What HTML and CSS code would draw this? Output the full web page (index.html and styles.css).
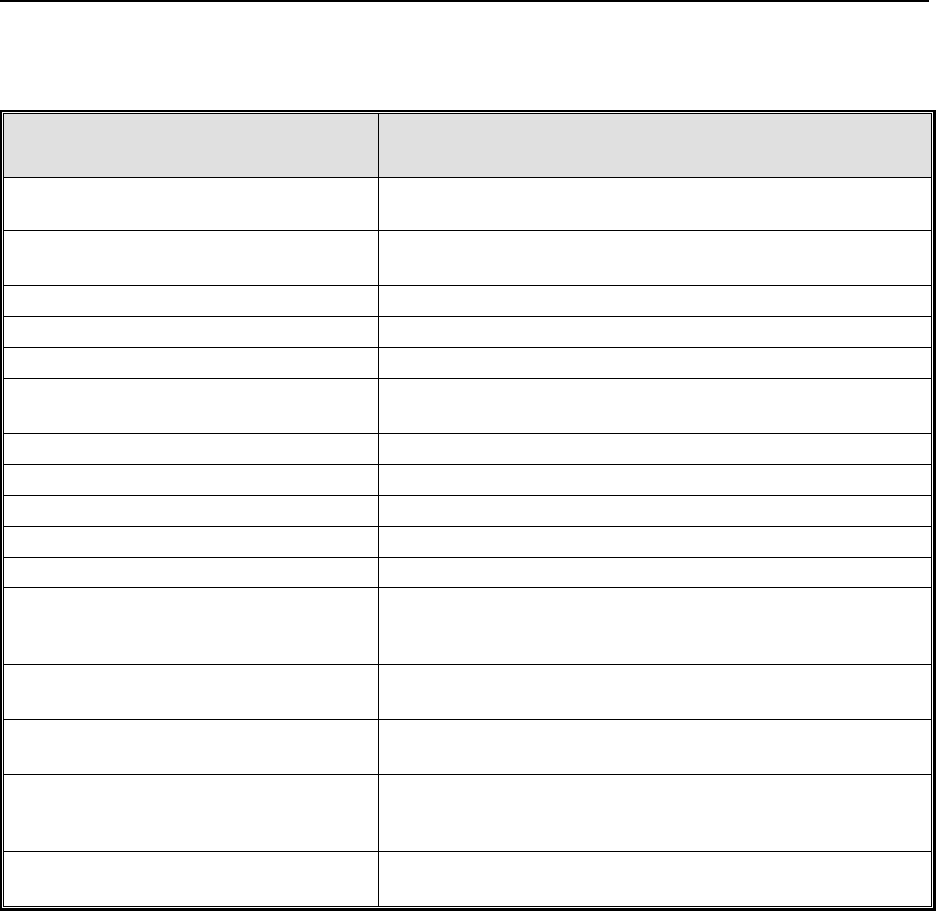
FILE: index.html
```html
<!DOCTYPE html>
<html lang="en">
<head>
<meta charset="utf-8">
<title>Table</title>
<link rel="stylesheet" href="styles.css">
</head>
<body>
<div class="rule"></div>
<div class="frame">
  <div class="grid">
    <div class="row head"><div class="c1"></div><div class="c2"></div></div>
    <div class="row d first"><div class="c1"></div><div class="c2"></div></div>
    <div class="row d"><div class="c1"></div><div class="c2"></div></div>
    <div class="row s"><div class="c1"></div><div class="c2"></div></div>
    <div class="row s"><div class="c1"></div><div class="c2"></div></div>
    <div class="row s"><div class="c1"></div><div class="c2"></div></div>
    <div class="row d"><div class="c1"></div><div class="c2"></div></div>
    <div class="row s"><div class="c1"></div><div class="c2"></div></div>
    <div class="row s"><div class="c1"></div><div class="c2"></div></div>
    <div class="row s"><div class="c1"></div><div class="c2"></div></div>
    <div class="row s"><div class="c1"></div><div class="c2"></div></div>
    <div class="row s last"><div class="c1"></div><div class="c2"></div></div>
    <div class="row t"><div class="c1"></div><div class="c2"></div></div>
    <div class="row d"><div class="c1"></div><div class="c2"></div></div>
    <div class="row d"><div class="c1"></div><div class="c2"></div></div>
    <div class="row t"><div class="c1"></div><div class="c2"></div></div>
    <div class="row d"><div class="c1"></div><div class="c2"></div></div>
  </div>
</div>
</body>
</html>
```
FILE: styles.css
```css
html, body {
  margin: 0;
  padding: 0;
  background: #ffffff;
  font-family: "Liberation Serif", serif;
}
.rule {
  width: 929px;
  height: 2px;
  background: #000000;
}
.frame {
  box-sizing: border-box;
  width: 936px;
  margin-top: 108px;
  border-style: solid;
  border-color: #000000;
  border-width: 2px 3px 3px 2px;
  padding: 1px;
}
.grid {
  border: 1px solid #000000;
  display: flex;
  flex-direction: column;
}
.row {
  box-sizing: border-box;
  display: grid;
  grid-template-columns: 374px 1fr;
  border-top: 1px solid #000000;
}
.row.head {
  border-top: none;
  height: 63px;
  background: #e0e0e0;
}
.row.s { height: 31px; }
.row.s.last { height: 30px; }
.row.d { height: 55px; }
.row.d.first { height: 53px; }
.row.t { height: 77px; }
.c2 {
  border-left: 1px solid #000000;
}
```
